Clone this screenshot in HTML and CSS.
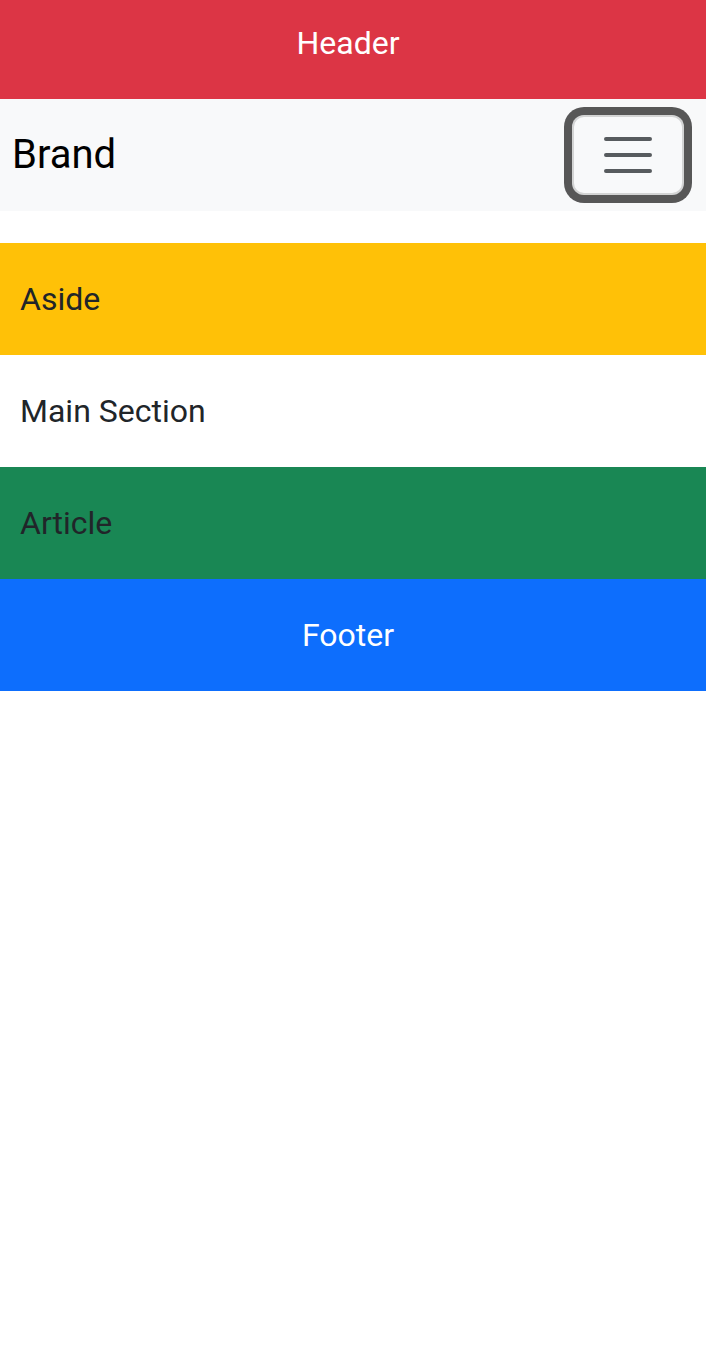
FILE: index.html
```html
<!DOCTYPE html>
<html lang="en">
<head>
<meta charset="utf-8">
<title>Layout</title>
<link rel="stylesheet" href="styles.css">
</head>
<body>
<header class="site-header">Header</header>
<nav class="navbar">
  <a class="brand" href="#">Brand</a>
  <button class="toggler" type="button" aria-label="Toggle navigation">
    <svg class="toggler-icon" viewBox="0 0 30 30" width="60" height="60" aria-hidden="true">
      <path d="M4 7h22M4 15h22M4 23h22" stroke="rgba(33,37,41,0.75)" stroke-width="2" stroke-linecap="round" stroke-miterlimit="10" fill="none"/>
    </svg>
  </button>
</nav>
<div class="content">
  <aside class="block aside">Aside</aside>
  <section class="block main">Main Section</section>
  <article class="block article">Article</article>
  <footer class="block footer">Footer</footer>
</div>
</body>
</html>
```
FILE: styles.css
```css
* { box-sizing: border-box; }
html, body {
  margin: 0;
  padding: 0;
  background: #fff;
}
body {
  font-family: Roboto, "Liberation Sans", Arial, sans-serif;
  font-size: 32px;
  line-height: 48px;
  color: #212529;
}
.site-header {
  height: 99px;
  padding: 19px 10px 0 0;
  background: #dc3545;
  color: #fff;
  text-align: center;
}
.navbar {
  display: flex;
  align-items: center;
  justify-content: space-between;
  padding: 16px 22px 16px 12px;
  background: #f8f9fa;
}
.brand {
  font-size: 40px;
  line-height: 60px;
  padding: 10px 0;
  color: #000;
  text-decoration: none;
}
.toggler {
  display: flex;
  align-items: center;
  justify-content: center;
  padding: 8px 24px;
  width: 112px;
  height: 80px;
  background: transparent;
  border: 2px solid rgba(0, 0, 0, 0.15);
  border-radius: 12px;
  box-shadow: 0 0 0 8px rgba(0, 0, 0, 0.65);
  cursor: pointer;
}
.toggler-icon {
  display: block;
  width: 60px;
  height: 60px;
}
.content {
  margin-top: 32px;
}
.block {
  display: block;
  padding: 32px 20px;
  min-height: 112px;
}
.aside { background: #ffc107; }
.main { background: #fff; }
.article { background: #198754; }
.footer {
  background: #0d6efd;
  color: #fff;
  text-align: center;
  padding-right: 30px;
}
```
